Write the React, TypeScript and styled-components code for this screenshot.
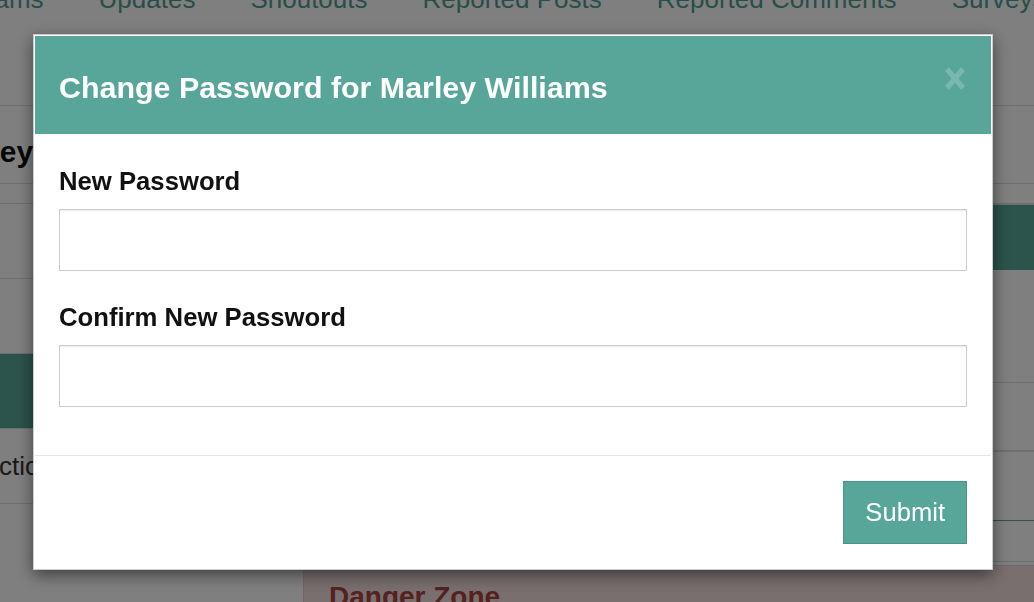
import React from 'react';
import styled, { createGlobalStyle } from 'styled-components';

const TEAL = '#58a699';

const GlobalStyle = createGlobalStyle`
  html, body {
    margin: 0;
    padding: 0;
    height: 100%;
    overflow: hidden;
    background: #fff;
  }
  body {
    font-family: "Liberation Sans", Arial, Helvetica, sans-serif;
    color: #333;
  }
  * { box-sizing: border-box; }
`;

// page behind the modal (scrolled sideways a bit)
const Page = styled.div`
  margin-left: -120px;
  width: 1400px;
`;

const TabBar = styled.nav`
  display: flex;
  gap: 55px;
  margin-top: -16px;
  height: 122px;
  padding-left: 87px;
  border-bottom: 1px solid #ddd;
  font-size: 26px;
  line-height: 30px;
  color: #4f9d90;
`;

const Tab = styled.a`
  white-space: nowrap;
`;

const PageHeader = styled.div`
  height: 78px;
  padding: 29px 0 0 53px;
  border-bottom: 1px solid #ddd;

  h2 {
    margin: 0;
    font-size: 30px;
    line-height: 34px;
    font-weight: 700;
    color: #111;
  }
`;

const Columns = styled.div`
  display: grid;
  grid-template-columns: 400px 1fr;
  column-gap: 23px;
  margin-top: 19px;
`;

const ListGroup = styled.div`
  border-top: 1px solid #ddd;
`;

const ListItem = styled.div<{ $active?: boolean }>`
  height: 75px;
  padding-left: 15px;
  border-bottom: 1px solid #ddd;
  font-size: 26px;
  line-height: 74px;
  white-space: nowrap;
  background: ${(p) => (p.$active ? TEAL : '#fff')};
  color: ${(p) => (p.$active ? '#fff' : '#333')};
`;

const Panel = styled.div`
  border: 1px solid #ddd;
  border-top-width: 2px;
`;

const PanelHeading = styled.div`
  height: 65px;
  padding: 0 25px;
  background: ${TEAL};
  color: #fff;
  font-size: 26px;
  line-height: 65px;
`;

const DetailRow = styled.div<{ $h: number; $line: string; $lineW?: number }>`
  height: ${(p) => p.$h}px;
  padding: 0 25px;
  border-bottom: ${(p) => p.$lineW || 1}px solid ${(p) => p.$line};
  font-size: 24px;
  display: flex;
  align-items: center;
`;

const DangerPanel = styled.div`
  margin-top: 3px;
  border: 1px solid #ebccd1;
  background: #f2dede;
  padding: 15px 25px;

  h3 {
    margin: 0;
    font-size: 28px;
    line-height: 32px;
    font-weight: 700;
    color: #a94442;
  }
`;

// modal
const Backdrop = styled.div`
  position: fixed;
  inset: 0;
  background: rgba(0, 0, 0, 0.5);
`;

const Dialog = styled.div`
  position: fixed;
  left: 33px;
  top: 34px;
  width: 960px;
  padding: 1px;
  background: #fff;
  border: 1px solid rgba(0, 0, 0, 0.2);
  box-shadow: 0 5px 15px rgba(0, 0, 0, 0.5);
`;

const Header = styled.div`
  height: 98px;
  display: flex;
  align-items: center;
  justify-content: space-between;
  padding: 4px 26px 0 24px;
  background: ${TEAL};
`;

const Title = styled.h4`
  margin: 0;
  font-size: 30.4px;
  line-height: 34px;
  font-weight: 700;
  color: #fff;
`;

const CloseButton = styled.button`
  align-self: flex-start;
  margin-top: 27px;
  padding: 0;
  border: 0;
  background: none;
  color: #fff;
  opacity: 0.2;
  line-height: 0;
  cursor: pointer;
`;

const Body = styled.div`
  padding: 32px 24px 17px;
`;

const FormGroup = styled.div`
  margin-bottom: 31px;
`;

const Label = styled.label`
  display: block;
  margin-bottom: 13px;
  font-size: 25.7px;
  line-height: 30px;
  font-weight: 700;
  color: #111;
`;

const Input = styled.input`
  display: block;
  width: 100%;
  height: 62px;
  padding: 0 14px;
  border: 1px solid #ccc;
  border-radius: 0;
  box-shadow: inset 0 1px 1px rgba(0, 0, 0, 0.075);
  font: inherit;
  font-size: 25px;
  outline: none;
`;

const Footer = styled.div`
  display: flex;
  justify-content: flex-end;
  padding: 25px 24px 24px;
  border-top: 1px solid #e5e5e5;
`;

const SubmitButton = styled.button`
  height: 63px;
  padding: 0 21px;
  border: 1px solid #4b9387;
  border-radius: 0;
  background: ${TEAL};
  color: #fff;
  font-family: inherit;
  font-size: 25.6px;
  cursor: pointer;
`;

const tabs = ['Teams', 'Updates', 'Shoutouts', 'Reported Posts', 'Reported Comments', 'Surveys'];

export default function App() {
  return (
    <>
      <GlobalStyle />
      <Page>
        <TabBar>
          {tabs.map((t) => (
            <Tab key={t}>{t}</Tab>
          ))}
        </TabBar>
        <PageHeader>
          <h2>Survey</h2>
        </PageHeader>
        <Columns>
          <ListGroup>
            <ListItem>Details</ListItem>
            <ListItem>Results</ListItem>
            <ListItem $active>Settings</ListItem>
            <ListItem>Survey Actions</ListItem>
          </ListGroup>
          <div>
            <Panel>
              <PanelHeading>Survey Details</PanelHeading>
              <DetailRow $h={113} $line="#ddd">Name</DetailRow>
              <DetailRow $h={69} $line="#ddd" $lineW={2}>Status</DetailRow>
              <DetailRow $h={69} $line={TEAL}>Responses</DetailRow>
              <DetailRow $h={40} $line="transparent" />
            </Panel>
            <DangerPanel>
              <h3>Danger Zone</h3>
            </DangerPanel>
          </div>
        </Columns>
      </Page>

      <Backdrop />
      <Dialog>
        <Header>
          <Title>Change Password for Marley Williams</Title>
          <CloseButton aria-label="Close">
            <svg width="20" height="23" viewBox="0 0 20 23">
              <path d="M2 2 L18 21 M18 2 L2 21" stroke="currentColor" strokeWidth="5.2" fill="none" />
            </svg>
          </CloseButton>
        </Header>
        <Body>
          <FormGroup>
            <Label>New Password</Label>
            <Input type="password" />
          </FormGroup>
          <FormGroup>
            <Label>Confirm New Password</Label>
            <Input type="password" />
          </FormGroup>
        </Body>
        <Footer>
          <SubmitButton>Submit</SubmitButton>
        </Footer>
      </Dialog>
    </>
  );
}
